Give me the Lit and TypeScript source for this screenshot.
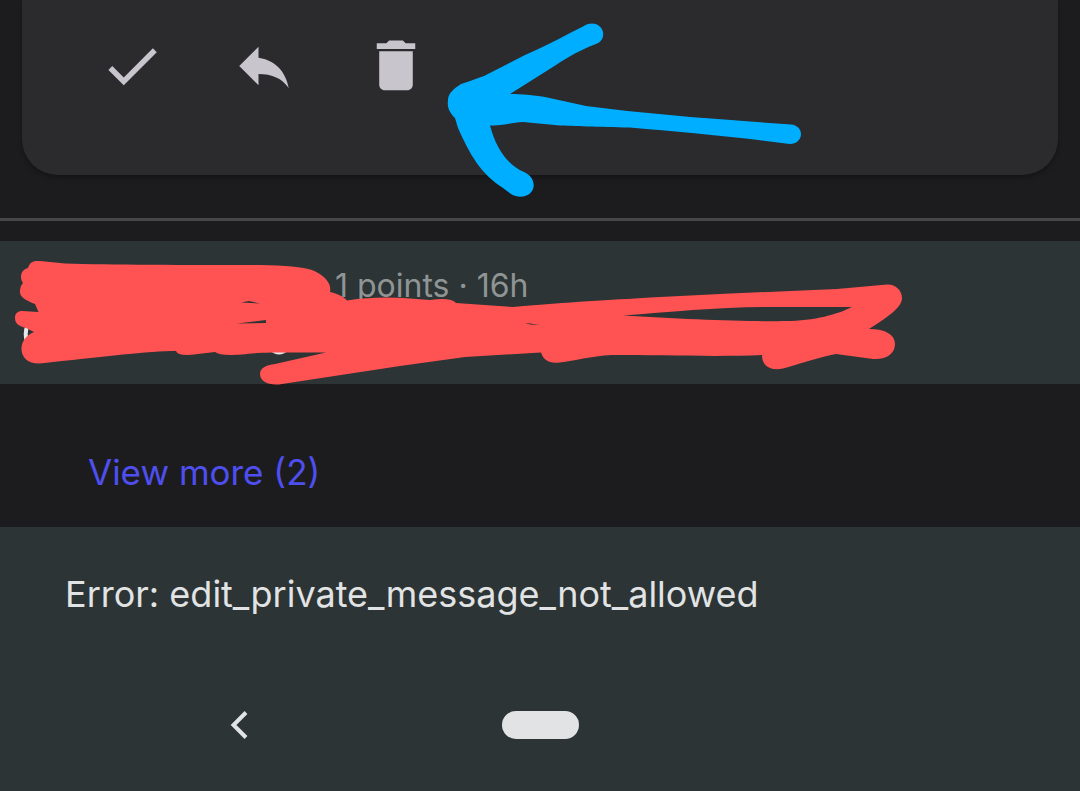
import { LitElement, html, css, svg } from "lit";
import { customElement } from "lit/decorators.js";

const ICONS = {
  check: svg`<path d="M9 16.17 4.83 12l-1.42 1.41L9 19 21 7l-1.41-1.41z"/>`,
  reply: svg`<path d="M10 9V5l-7 7 7 7v-4.1c5 0 8.5 1.6 11 5.1-1-5-4-10-11-11z"/>`,
  trash: svg`<path d="M5.9 6.6h12.2v12.2c0 1.1-.9 2-2 2H7.9c-1.1 0-2-.9-2-2zM19 3.700h-3.500l-1-1h-5l-1 1H5v2.100h14z"/>`,
  back: svg`<path d="M21 2.500 8.500 15 21 27.500" fill="none" stroke="currentColor" stroke-width="4"/>`,
};

@customElement("app-root")
export class AppRoot extends LitElement {
  static styles = css`
    :host {
      display: block;
      font-family: Inter, Roboto, sans-serif;
      color: #e1e3e4;
      background: #1c1c1e;
    }
    .screen {
      position: relative;
      display: flex;
      flex-direction: column;
      min-height: 100vh;
      overflow: hidden;
    }
    button {
      border: 0;
      padding: 0;
      background: none;
      font: inherit;
      color: inherit;
      cursor: pointer;
    }
    svg {
      display: block;
    }
    .card {
      display: flex;
      gap: 66px;
      margin: 0 22px;
      padding: 33px 77px 76px;
      border-radius: 0 0 36px 36px;
      background: #2b2b2d;
      box-shadow: 0 3px 4px rgba(0, 0, 0, 0.25);
      color: #c8c5cd;
    }
    .card svg {
      width: 66px;
      height: 66px;
      fill: currentColor;
    }
    .divider {
      width: 100%;
      height: 3px;
      margin: 43px 0 20px;
      border: 0;
      background: #464648;
    }
    .comment {
      box-sizing: border-box;
      min-height: 143px;
      padding: 25px 22px 24px 335px;
      background: #2c3435;
    }
    .meta {
      margin: 0;
      font-size: 32px;
      line-height: 40px;
      color: #8f9595;
    }
    .more {
      box-sizing: border-box;
      height: 143px;
      padding: 34px 88px 0;
    }
    .more button {
      font-size: 35px;
      line-height: 109px;
      color: #4f4ff0;
    }
    .bottom {
      flex: 1;
      display: flex;
      flex-direction: column;
      justify-content: space-between;
      background: #2c3435;
    }
    .error {
      margin: 0;
      padding: 43px 65px 0;
      font-size: 36px;
      line-height: 48px;
    }
    .nav {
      display: grid;
      grid-template-columns: 1fr 77px 1fr;
      align-items: center;
      padding: 0 0 51px;
    }
    .back {
      justify-self: center;
      width: 30px;
      height: 30px;
      margin-right: 22px;
    }
    .home {
      height: 28px;
      border-radius: 14px;
      background: #e2e3e5;
    }
    .ink {
      position: absolute;
      top: 0;
      left: 0;
      pointer-events: none;
    }
    .blue {
      fill: #00aeff;
    }
    .red {
      fill: #ff5252;
      fill-rule: evenodd;
    }
    .trace {
      fill: none;
      stroke: #e6e8e8;
      stroke-width: 4;
    }
  `;

  private icon(name: "check" | "reply" | "trash") {
    return html`<svg viewBox="0 0 24 24" aria-hidden="true">${ICONS[name]}</svg>`;
  }

  render() {
    return html`
      <main class="screen">
        <section class="card">
          <button aria-label="Mark as read">${this.icon("check")}</button>
          <button aria-label="Reply">${this.icon("reply")}</button>
          <button aria-label="Delete">${this.icon("trash")}</button>
        </section>
        <hr class="divider" />
        <article class="comment"><p class="meta">1 points · 16h</p></article>
        <div class="more"><button>View more (2)</button></div>
        <footer class="bottom">
          <p class="error" role="alert">Error: edit_private_message_not_allowed</p>
          <nav class="nav">
            <button class="back" aria-label="Back">
              <svg width="30" height="30" viewBox="0 0 30 30">${ICONS.back}</svg>
            </button>
            <button class="home" aria-label="Home"></button>
          </nav>
        </footer>
        <svg class="ink" width="1080" height="400" viewBox="0 0 1080 400" aria-hidden="true">
          <path class="trace" d="M28 325Q24 332 27 342M271 349Q279 356 287 349" />
          <path
            class="blue"
            d="M584 26C592 21 601 24 603 32C604 38 601 42 596 44C580 50 568 57 556 65L510 94C522 94 532 95 545 97L586 106C640 113 700 118 750 121.500L791 124.500C797 125 801 129 801 134C801 140 796 144 790 144C730 136 680 132 630 127.500C600 127 570 126 560 125.500L523 122C512 122 506 126 490 125.500C496 149 508 165 524 172C533 176 535 184 533 189C530 197 519 199 511 194L503 188C481 174 470 155 458 128L455 118C449 112 447 107 448 100C448 94 453 89 461 84C470 81 476 79 484 76L525 55Q550 44 570 33Z"
          />
          <path
            class="red"
            d="M28 268C30 261 34 261 40 261L65 263.500C110 265 190 265 260 265C285 265.500 303 267 312 270C324 275 332 283 330 292C339 294 344 297 347 300.500C370 297 390 297 410 298.500L430 300Q451 297 456 303L513 307C570 302 610 300 650 297.500L730 293.500L837 289L887 284.500C895 284 902 290 902 298C902 308 886 318 869 329C886 329 895 335 895 344C895 354 886 360 873 359L836 354C820 357 803 363 783 368.500C770 371 762 366 762 355C720 357 660 355 612 355C590 356 575 361 560 362.500C548 364 543 359 541 352.500L465 357L400 366L282 384C270 386 260 382 260 374C260 368 266 365 275 364L326 352.500H272C250 353 242 355 230 355Q219 355 215 352L198 354Q178 357 176 351C150 351 100 357 40 363.500C28 364 21 357 21.500 348C21.500 341 27 335 34 332L26 328C18 326 15 323 15 318C15 313 18 311 22 311L38.500 312L35 304C25 300 19 297 20 290Q20 286 23 283C19 277 21 270 28 268Z
            M241 302.500L249 301L260 303.500Z
            M237 323.500L266 320V323Z
            M525 323L530 323.500L540 325L530 324.500Z
            M623 315.500C670 312 720 307 770 307H852C838 314 815 321 785 321C750 322 680 319 623 315.500Z"
          />
        </svg>
      </main>
    `;
  }
}
